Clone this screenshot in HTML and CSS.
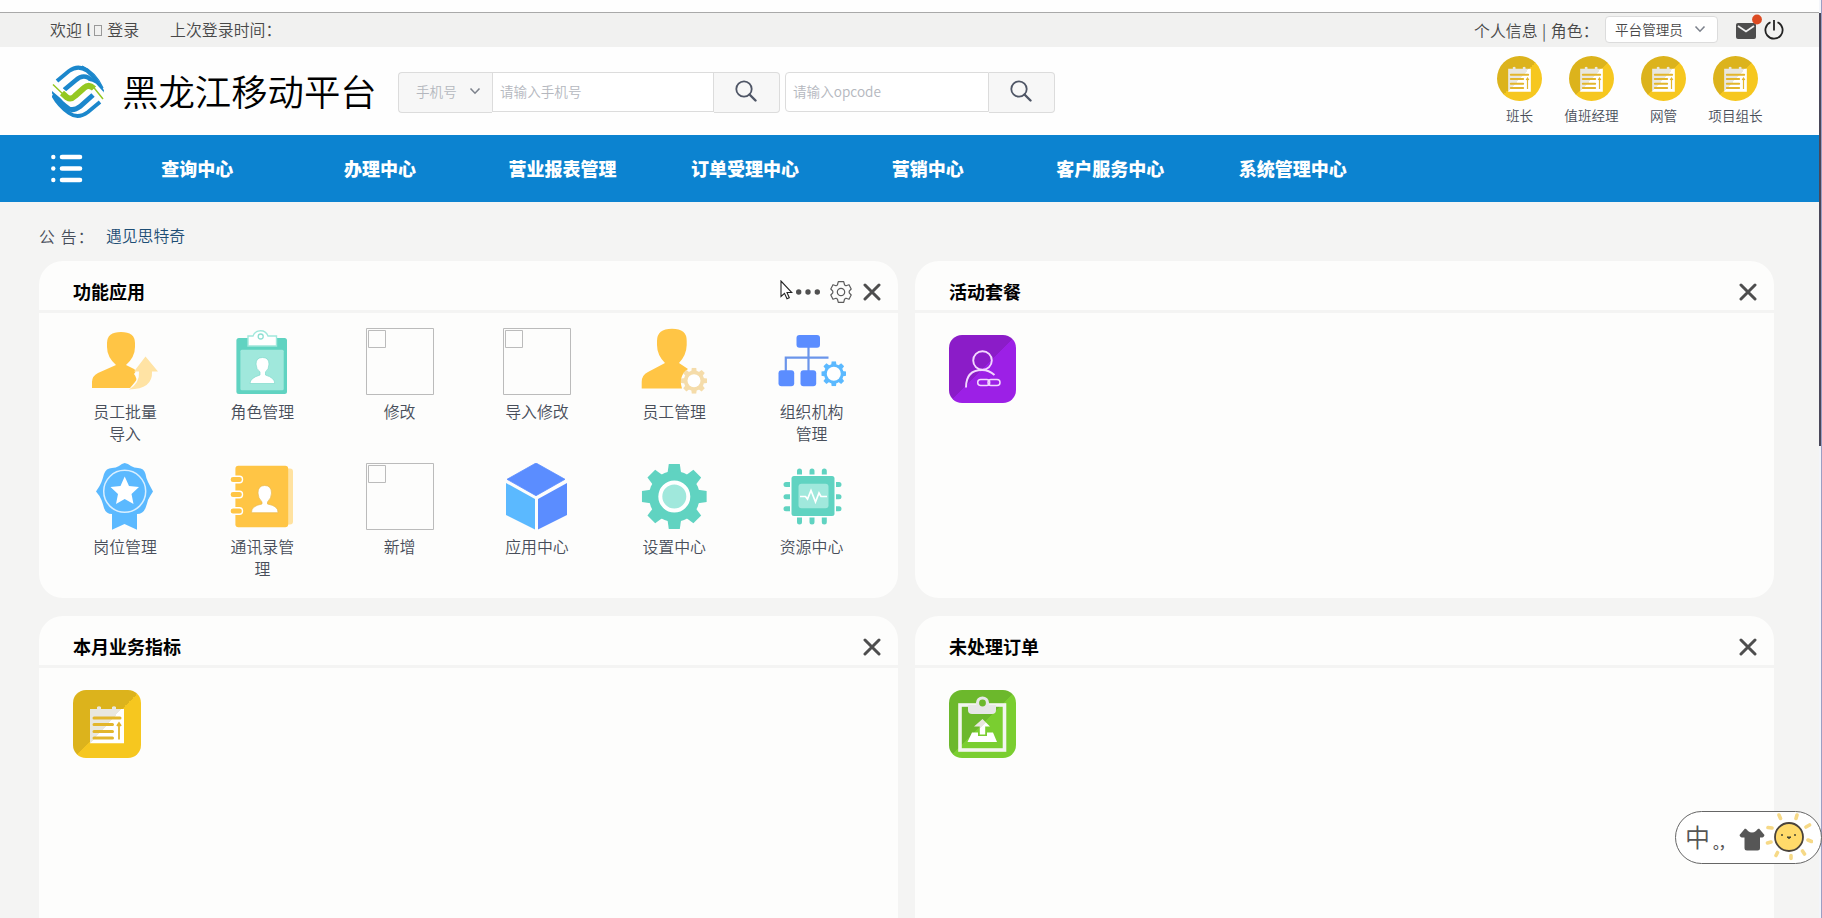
FILE: index.html
```html
<!DOCTYPE html>
<html lang="zh-CN">
<head>
<meta charset="utf-8">
<title>黑龙江移动平台</title>
<link rel="stylesheet" href="styles.css">
</head>
<body>
<svg class="defs" width="0" height="0">
  <defs>
    <linearGradient id="shadeY" x1="0" y1="0" x2="1" y2="1"><stop offset=".5" stop-color="#dcb31c"/><stop offset=".5" stop-color="#f6c71f"/></linearGradient>
    <linearGradient id="shadeP" x1="0" y1="0" x2="1" y2="1"><stop offset=".5" stop-color="#8b1cc8"/><stop offset=".5" stop-color="#9c20e6"/></linearGradient>
    <linearGradient id="shadeG" x1="0" y1="0" x2="1" y2="1"><stop offset=".5" stop-color="#6cb82c"/><stop offset=".5" stop-color="#7ace30"/></linearGradient>
    <linearGradient id="paper" x1="0" y1="0" x2="1" y2="1"><stop offset=".5" stop-color="#e9e7df"/><stop offset=".5" stop-color="#fff"/></linearGradient>
    <symbol id="note" viewBox="0 0 36 38">
      <path d="M1 3.500H8V1.500Q10 0 12 1.500V3.500H23V1.500Q25 0 27 1.500V3.500H35V38H1Z" fill="url(#paper)"/>
      <path d="M5 12.500H31M5 19H23.500M5 26H23.500M5 32.500H23.500" stroke="#e3b62c" stroke-width="3" stroke-linecap="round"/>
      <path d="M30 34V19M28 20.500L30 17.500L32 20.500" stroke="#e3b62c" stroke-width="1.800" fill="none"/>
    </symbol>
    <symbol id="gear" viewBox="-32.500 -32.500 65 65">
      <path id="tooth" d="M-5.500 -32.500H5.500L7 -22H-7Z"/>
      <use href="#tooth" transform="rotate(45)"/><use href="#tooth" transform="rotate(90)"/><use href="#tooth" transform="rotate(135)"/>
      <use href="#tooth" transform="rotate(180)"/><use href="#tooth" transform="rotate(225)"/><use href="#tooth" transform="rotate(270)"/><use href="#tooth" transform="rotate(315)"/>
      <circle r="25.500"/>
    </symbol>
    <symbol id="search" viewBox="0 0 22 22"><circle cx="9" cy="9" r="7.700" fill="none" stroke="#4f5666" stroke-width="1.800"/><path d="M14.500 14.500L20.500 20.500" stroke="#4f5666" stroke-width="2.400" stroke-linecap="round"/></symbol>
    <symbol id="chev" viewBox="0 0 12 8"><path d="M1.500 1.500L6 6.200L10.500 1.500" fill="none" stroke="#7d828c" stroke-width="1.600"/></symbol>
    <symbol id="close" viewBox="0 0 18 18"><path d="M2 2L16 16M16 2L2 16" stroke="#4e4e4e" stroke-width="3" stroke-linecap="round"/></symbol>
    <symbol id="missing" viewBox="0 0 68 67"><path d="M.5 .5H67.500V66.500H.500ZM2.500 2.500H19.500V19.500H2.500Z" fill="none" stroke="#bbb"/></symbol>
  </defs>
</svg>

<div class="page">
  <div class="topbar">
    <div class="welcome"><span>欢迎 l<i class="glyph"></i> 登录</span><span>上次登录时间：</span></div>
    <div class="account">
      <span class="role">个人信息 | 角色：</span>
      <div class="role-select"><span>平台管理员</span><svg width="12" height="8"><use href="#chev"/></svg></div>
      <svg class="mail" width="26" height="26" viewBox="0 0 26 26"><rect y="9" width="20" height="16" rx="2" fill="#4d4d4d"/><path d="M2 12L10 17.500L18 12" fill="none" stroke="#f1f1f1" stroke-width="1.800"/><circle cx="21" cy="5.500" r="4.900" fill="#dc4a22"/></svg>
      <svg class="power" width="20" height="20" viewBox="0 0 20 20"><path d="M6.500 2.200A8.600 8.600 0 1 0 13.500 2.200" fill="none" stroke="#222" stroke-width="1.800"/><path d="M10 0V10.500" stroke="#222" stroke-width="1.800"/></svg>
    </div>
  </div>

  <div class="header">
    <svg class="logo" width="52" height="54" viewBox="0 0 52 54">
      <g fill="none" stroke="#1b87cc">
        <path d="M5 16L17 6Q26 -.5 35 5.500Q45 14 50.500 27" stroke-width="4"/>
        <path d="M30 1Q44 7 51 23" stroke-width="1.300"/>
        <path d="M12 25L24 15Q30 9.500 36 12.500Q44 18 51 30" stroke-width="4.500"/>
        <path d="M1 24Q5 35 13 41L17 44Q22 46 28 41.500L41 30" stroke-width="5"/>
        <path d="M1 30Q6 40 17 48Q26 54.500 36 47L48 37" stroke-width="3.800"/>
      </g>
      <path d="M1 21L14 32Q18 35 23 31L33 22Q37 19 41 22L51 33" fill="none" stroke="#fff" stroke-width="9"/>
      <path d="M1 19.500L14 32Q18 35 23 31L33 22Q37 18 41 21.500L51 34" fill="none" stroke="#94c822" stroke-width="1.500"/>
      <path d="M10 28L15 32.500Q19 35 23 31L32 23Q37 18.500 42 23.500" fill="none" stroke="#94c822" stroke-width="6"/>
    </svg>
    <h1 class="brand">黑龙江移动平台</h1>
    <div class="search phone">
      <div class="kind"><span>手机号</span><svg width="12" height="8"><use href="#chev"/></svg></div>
      <div class="field">请输入手机号</div>
      <div class="go"><svg width="22" height="22"><use href="#search"/></svg></div>
    </div>
    <div class="search code">
      <div class="field">请输入opcode</div>
      <div class="go"><svg width="22" height="22"><use href="#search"/></svg></div>
    </div>
    <div class="roles">
      <div class="role-item"><svg width="45" height="45"><circle cx="22.500" cy="22.500" r="22.500" fill="url(#shadeY)"/><use href="#note" x="10.500" y="10" width="24" height="26"/></svg><span>班长</span></div>
      <div class="role-item"><svg width="45" height="45"><circle cx="22.500" cy="22.500" r="22.500" fill="url(#shadeY)"/><use href="#note" x="10.500" y="10" width="24" height="26"/></svg><span>值班经理</span></div>
      <div class="role-item"><svg width="45" height="45"><circle cx="22.500" cy="22.500" r="22.500" fill="url(#shadeY)"/><use href="#note" x="10.500" y="10" width="24" height="26"/></svg><span>网管</span></div>
      <div class="role-item"><svg width="45" height="45"><circle cx="22.500" cy="22.500" r="22.500" fill="url(#shadeY)"/><use href="#note" x="10.500" y="10" width="24" height="26"/></svg><span>项目组长</span></div>
    </div>
  </div>

  <div class="nav">
    <svg class="menu" width="32" height="29" viewBox="0 0 32 29"><path d="M11 3H29M11 14.500H29M11 26H29" stroke="#fff" stroke-width="4.600" stroke-linecap="round"/><g fill="#fff"><circle cx="2.300" cy="3" r="2.200"/><circle cx="2.300" cy="14.500" r="2.200"/><circle cx="2.300" cy="26" r="2.200"/></g></svg>
    <a>查询中心</a><a>办理中心</a><a>营业报表管理</a><a>订单受理中心</a><a>营销中心</a><a>客户服务中心</a><a>系统管理中心</a>
  </div>

  <div class="notice"><span class="notice-label">公 告：</span><a class="notice-link">遇见思特奇</a></div>

  <div class="cards">
    <section class="card">
      <div class="card-head"><h2>功能应用</h2>
        <div class="tools">
          <svg width="24" height="6" viewBox="0 0 24 6"><g fill="#505050"><circle cx="2.700" cy="3" r="2.700"/><circle cx="12" cy="3" r="2.700"/><circle cx="21.300" cy="3" r="2.700"/></g></svg>
          <svg class="cog" width="22" height="22" viewBox="-11 -11 22 22"><path d="M-2.700 -10.300H2.700L3.600 -7Q4.300 -6.600 5 -6.200L8 -7.300L10.200 -3L8.200 -.8V.8L10.200 3L8 7.300L5 6.200Q4.300 6.700 3.600 7L2.700 10.300H-2.700L-3.600 7Q-4.300 6.700 -5 6.200L-8 7.300L-10.200 3L-8.200 .8V-.8L-10.200 -3L-8 -7.300L-5 -6.200Q-4.300 -6.700 -3.600 -7Z" fill="none" stroke="#5c5c5c" stroke-width="1.200" stroke-linejoin="round"/><circle r="3.700" fill="none" stroke="#5c5c5c" stroke-width="1.200"/></svg>
          <svg class="x" width="18" height="18"><use href="#close"/></svg>
        </div>
      </div>
      <div class="apps">
        <div class="app"><svg viewBox="0 0 68 67"><path d="M16 15Q16 4 30 4T44 15V19Q44 29 35 37L43 41Q46 43 43 46Q47 51 44 54L39 60H1V54Q1 48 7 45L25 37Q16 29 16 19Z" fill="#ffc545"/><path d="M54.500 28.500L67 43.500H61Q62 61 38 61.500Q49 55 48 43.500H43Z" fill="#ffe3a4"/></svg><span>员工批量导入</span></div>
        <div class="app"><svg viewBox="0 0 68 67"><rect x="8.400" y="10" width="50.600" height="56" rx="2.500" fill="#60d3c1"/><rect x="12.400" y="21.700" width="43.300" height="40.600" rx="1.500" fill="#a0e8dc"/><path d="M20 8H25A8 8 0 0 1 40 8H48.500V18H20Z" fill="#fff" stroke="#a0e8dc" stroke-width="1.400"/><circle cx="32.700" cy="8.500" r="2.500" fill="#fff" stroke="#8fdfd2" stroke-width="1.300"/><path d="M28 36Q28 29.500 34.500 29.500T41 36Q41 41 37.500 44V47Q47 50 46.700 55.500H22Q22 50 32 47V44Q28 41 28 36Z" fill="#fff" stroke="#80dacb" stroke-width=".7"/></svg><span>角色管理</span></div>
        <div class="app"><svg><use href="#missing"/></svg><span>修改</span></div>
        <div class="app"><svg><use href="#missing"/></svg><span>导入修改</span></div>
        <div class="app"><svg viewBox="0 0 68 67"><path d="M17 13Q17 .7 32 .7T46.700 13V17Q46.500 27 39 35L48 41Q38 48 42 60.500H1.700V54Q1.700 47 8 44L25 35Q17 27 17 17Z" fill="#ffc545"/><use href="#gear" x="41" y="39.700" width="26" height="26" fill="#f5dcaa"/><circle cx="54" cy="52.700" r="6.500" fill="#fff"/></svg><span>员工管理</span></div>
        <div class="app"><svg viewBox="0 0 68 67"><path d="M30.500 18V44M7.800 43V29.700H50.500" fill="none" stroke="#6b95ea" stroke-width="2.200"/><g fill="#5b8dff"><rect x="18.500" y="7" width="23.500" height="12.700" rx="3"/><rect x=".5" y="42.300" width="15.700" height="16" rx="3"/><rect x="22.500" y="42.300" width="15.700" height="16" rx="3"/></g><use href="#gear" x="43.300" y="33.200" width="25" height="25" fill="#5bb9ff"/><circle cx="55.800" cy="45.700" r="7" fill="#fff"/></svg><span>组织机构管理</span></div>
        <div class="app"><svg viewBox="0 0 68 67"><path d="M21 44H46V66.700L33.500 61L21 66.700Z" fill="#5bb9ff"/><path d="M33.700 0Q37 .5 40 3Q43 5 47 5Q53 5 54.500 11Q55 15 57 19Q59 23 62 28.500Q59 33 57 37Q56 41 54.500 45Q52 51 46 51H21Q15 51 13 45Q12 41 10.500 37Q9 33 5 28.500Q9 23 10.500 19Q12 15 13 11Q15 5 21 5Q25 5 28 3Q31 .5 33.700 0Z" fill="#5bb9ff"/><circle cx="33.700" cy="28.300" r="21" fill="none" stroke="#d9efff" stroke-width="1.500"/><path d="M33.700 13.500L38 23L48 24L40.500 31L42.500 41L33.700 36L25 41L27 31L19.500 24L29.500 23Z" fill="#fff"/></svg><span>岗位管理</span></div>
        <div class="app"><svg viewBox="0 0 68 67"><rect x="50" y="5.500" width="15" height="56" rx="3" fill="#ffe2a0"/><rect x="7.400" y="2.700" width="52.800" height="61.600" rx="3" fill="#ffc545"/><g fill="#ffc545" stroke="#fff" stroke-width="1.400"><rect x="2" y="13.300" width="12.500" height="6.500" rx="3"/><rect x="2" y="28.300" width="12.500" height="6.500" rx="3"/><rect x="2" y="44.800" width="12.500" height="6.500" rx="3"/></g><path d="M30 30Q30 22.500 36.700 22.500T43.500 30Q43.500 35 39.500 39V41Q50.500 43 50 49.700H23.500Q23 43 34 41V39Q30 35 30 30Z" fill="#fff" stroke="#e8b94d" stroke-width=".7"/></svg><span>通讯录管理</span></div>
        <div class="app"><svg><use href="#missing"/></svg><span>新增</span></div>
        <div class="app"><svg viewBox="0 0 68 67"><path d="M33 0L62 16.300L33 32.700L4 16.300Z" fill="#5b8dff" stroke="#5b8dff" stroke-width=".8" stroke-linejoin="round"/><path d="M3 20L32 36V66.500L3 52Z" fill="#5bb9ff"/><path d="M35 36L64 20V52L35 66.500Z" fill="#5b8dff"/></svg><span>应用中心</span></div>
        <div class="app"><svg viewBox="0 0 68 67"><use href="#gear" x="1.800" y="1" width="65" height="65" fill="#60d3c1"/><circle cx="34.300" cy="33.500" r="14" fill="#a0e8dc" stroke="#fff" stroke-width="4"/></svg><span>设置中心</span></div>
        <div class="app"><svg viewBox="0 0 68 67"><path d="M21.500 8V59M34 8V59M46.300 8V59M8 21.500H61M8 33.800H61M8 45.700H61" stroke="#60d3c1" stroke-width="5" stroke-linecap="round"/><rect x="12" y="11.500" width="46" height="43" rx="3" fill="#fff"/><rect x="13.500" y="13" width="43" height="40" rx="2.500" fill="#60d3c1"/><rect x="20.500" y="20.700" width="30" height="24.500" rx="3" fill="#a0e8dc"/><path d="M22 33.500H27.500L29.500 36L33 27.500L37.500 39L41 30L43 33.500H49" fill="none" stroke="#fff" stroke-width="1.700"/></svg><span>资源中心</span></div>
      </div>
    </section>

    <section class="card">
      <div class="card-head"><h2>活动套餐</h2><div class="tools"><svg class="x" width="18" height="18"><use href="#close"/></svg></div></div>
      <div class="tile"><svg width="67" height="68" viewBox="0 0 67 68"><rect width="67" height="68" rx="13" fill="url(#shadeP)"/><g fill="none" stroke="#f3d8ff" stroke-width="1.900"><circle cx="33.500" cy="25.500" r="9.300"/><path d="M17 52.500Q17 35 33 35Q40 35 45.500 40"/><rect x="28.700" y="44.500" width="12" height="6" rx="3" stroke-width="1.500"/><rect x="39" y="44.500" width="12" height="6" rx="3" stroke-width="1.500"/></g></svg></div>
    </section>

    <section class="card">
      <div class="card-head"><h2>本月业务指标</h2><div class="tools"><svg class="x" width="18" height="18"><use href="#close"/></svg></div></div>
      <div class="tile"><svg width="68" height="68" viewBox="0 0 68 68"><rect width="68" height="68" rx="13" fill="url(#shadeY)"/><use href="#note" x="16" y="15.500" width="36" height="38"/></svg></div>
    </section>

    <section class="card">
      <div class="card-head"><h2>未处理订单</h2><div class="tools"><svg class="x" width="18" height="18"><use href="#close"/></svg></div></div>
      <div class="tile"><svg width="67" height="68" viewBox="0 0 67 68"><rect width="67" height="68" rx="13" fill="url(#shadeG)"/><rect x="11" y="15" width="44.500" height="45" fill="none" stroke="#f3f5ef" stroke-width="3.600"/><path d="M19 15H47V20Q47 24 43 24H23Q19 24 19 20Z" fill="#e7e7e7"/><circle cx="33.500" cy="13" r="5" fill="#6cb82c" stroke="#e7e7e7" stroke-width="3.200"/><path d="M23 42.500H29V46H38V42.500H44L48 52H18.500Z" fill="#fff"/><path d="M33.500 29L41 36.500H36.200V44.500H30.800V36.500H25Z" fill="url(#paper)"/></svg></div>
    </section>
  </div>
</div>

<div class="scroll"><div class="thumb"></div></div>
<svg class="cursor" width="13" height="20" viewBox="0 0 13 20"><path d="M1 1V16.500L4.500 13.300L7 18.800L9.300 17.700L7 12.500H11.800Z" fill="#fff" stroke="#222" stroke-width="1.100"/></svg>
<div class="ime">
  <span class="ime-lang">中</span><span class="ime-punct">。，</span>
  <svg class="shirt" width="26" height="23" viewBox="0 0 26 23"><path d="M6 .5Q8 1 9 3Q13 6 17 3Q18 1 20 .5L25.500 7Q25 10 21 9.500V20Q21 22.500 18.500 22.500H8Q5.500 22.500 5.500 20V9.500Q1 10 .5 7Z" fill="#565656"/></svg>
  <svg class="sun" width="48" height="50" viewBox="-24 -25 48 50"><g stroke="#f6d987" stroke-width="3.600" stroke-linecap="round"><path d="M-10 -22L-8.500 -18.500M8 -22L7 -18.500M20.500 -12L17 -10M22.500 4.500L19 3M15.500 17L13.500 14M2 21.500V18.500M-13 18.500L-11.500 15.500M-21.500 6L-18 5M-21 -9.500L-17 -9"/></g><circle r="14" fill="#ffda6a" stroke="#4a433b" stroke-width="1.800"/><g fill="#443"><circle cx="-7" cy="-2" r="1"/><circle cx="6" cy="-2" r="1"/></g><path d="M-2 0Q0 3 2 0Z" stroke="#443" fill="#443"/></svg>
</div>
</body>
</html>
```

FILE: styles.css
```css
* { box-sizing: border-box; }
body { margin: 0; height: 918px; overflow: hidden; position: relative; background: #f4f4f3; color: #484e5a; font-family: "Noto Sans CJK SC", sans-serif; font-weight: 350; font-size: 16px; }
svg { display: block; flex: none; }
.defs { position: absolute; }
.page { width: 1819px; height: 918px; overflow: hidden; padding-top: 12px; background: linear-gradient(#fefefe 12px, transparent 12px); }

.topbar { height: 35px; display: flex; align-items: center; justify-content: space-between; padding: 0 35px 0 50px; background: #f1f1f0; border-top: 1px solid #a9a9a9; color: #484848; }
.welcome { display: flex; gap: 31px; font-size: 15.900px; line-height: 34px; word-spacing: 1px; }
.glyph { display: inline-block; width: 8px; height: 11px; margin: 0 1px 0 3px; border: 1px solid #999; }
.account { display: flex; align-items: center; height: 34px; }
.role { width: 130px; font-size: 15.900px; white-space: nowrap; word-spacing: 1px; }
.role-select { width: 113px; height: 27px; display: flex; align-items: center; justify-content: space-between; padding: 0 11px 0 9px; background: #fff; border: 1px solid #dcdcdc; border-radius: 4px; font-size: 13.600px; margin: 0 -1px 2px 1px; }
.mail { margin: 0 2px 6px 19px; }
.power { margin: 0; }

.header { height: 88px; display: flex; align-items: center; background: #fefefe; padding: 0 47.500px 0 52px; }
.logo { margin-top: 1px; }
.brand { margin: -2px 0 0 18px; width: 276px; color: #000; font-weight: 350; font-size: 36.400px; line-height: 50px; white-space: nowrap; }
.search { display: flex; height: 41px; align-items: flex-start; color: #b4b7be; font-size: 13.600px; margin-top: 3px; }
.phone { width: 382px; }
.code { width: 270px; margin-left: 5px; }
.kind { width: 94px; height: 41px; display: flex; align-items: center; justify-content: space-between; padding: 0 11px 3px 17px; background: #f7f7f7; border: 1px solid #dcdcdc; border-right: 0; border-radius: 4px 0 0 4px; }
.field { flex: 1; height: 40px; line-height: 37px; padding-left: 7px; border: 1px solid #dcdcdc; background: #fff; }
.code .field { border-radius: 4px 0 0 4px; }
.go { width: 66px; height: 41px; padding: 7px 0 0 21px; background: #f7f7f7; border: 1px solid #dcdcdc; border-left: 0; border-radius: 0 4px 4px 0; }
.roles { display: flex; margin-left: auto; height: 88px; padding-top: 9px; }
.role-item { width: 72px; display: flex; flex-direction: column; align-items: center; font-size: 13.600px; line-height: 20px; gap: 4px; white-space: nowrap; }

.nav { height: 67px; display: flex; align-items: center; background: #0c83d0; color: #fff; font-size: 18px; font-weight: 900; }
.menu { margin: -1px 22px 0 51px; }
.nav a { width: 182.600px; text-align: center; line-height: 26px; margin-top: -2px; }
.nav a:first-of-type { margin-left: 1px; }

.notice { height: 59px; padding: 8px 0 0 39px; display: flex; align-items: center; font-size: 15.800px; }
.notice-label { width: 67px; letter-spacing: 1.200px; padding-top: 1px; }
.notice-link { color: #1d4e75; }

.cards { margin: 0 45px 0 39px; display: grid; grid-template-columns: 859px 859px; grid-template-rows: 337px 337px; gap: 18px 17px; }
.card { background: #fdfdfc; border-radius: 24px; }
.card-head { height: 52px; border-bottom: 3px solid #f4f4f3; display: flex; align-items: center; justify-content: space-between; padding: 11px 17px 0 34px; }
.card h2 { margin: -1px 0 0; color: #000; font-size: 18px; font-weight: 700; line-height: 24px; }
.tools { display: flex; align-items: center; margin-bottom: -1px; }
.cog { margin: 0 11px 0 10px; }
.apps { display: grid; grid-template-columns: repeat(6, 137.300px); grid-auto-rows: 135px; padding: 15px 0 0 17.400px; }
.app { display: flex; flex-direction: column; align-items: center; }
.app svg { width: 68px; height: 67px; margin-bottom: 6px; }
.app span { width: 66px; font-size: 15.900px; line-height: 22px; text-align: center; }
.tile { padding: 22px 0 0 34px; }

.scroll { position: absolute; top: 0; right: 0; width: 3px; height: 918px; padding-top: 13px; border-right: 1px solid #9b9fc4; background: #f3f5fa; }
.thumb { height: 433px; background: #494759; }
.cursor { position: absolute; left: 780px; top: 280px; }
.ime { position: absolute; left: 1675px; top: 811px; width: 147px; height: 53px; display: flex; align-items: center; padding-left: 9px; border: 1.500px solid #666; border-radius: 27px; background: #fff; color: #555; }
.ime-lang { width: 28px; font-size: 25px; line-height: 40px; margin-top: -3px; }
.ime-punct { width: 26px; font-size: 15px; font-weight: 500; line-height: 24px; white-space: nowrap; letter-spacing: -2px; padding-top: 9px; }
.shirt { margin-top: 3px; }
.sun { margin: -2px 0 0 0; }
```
